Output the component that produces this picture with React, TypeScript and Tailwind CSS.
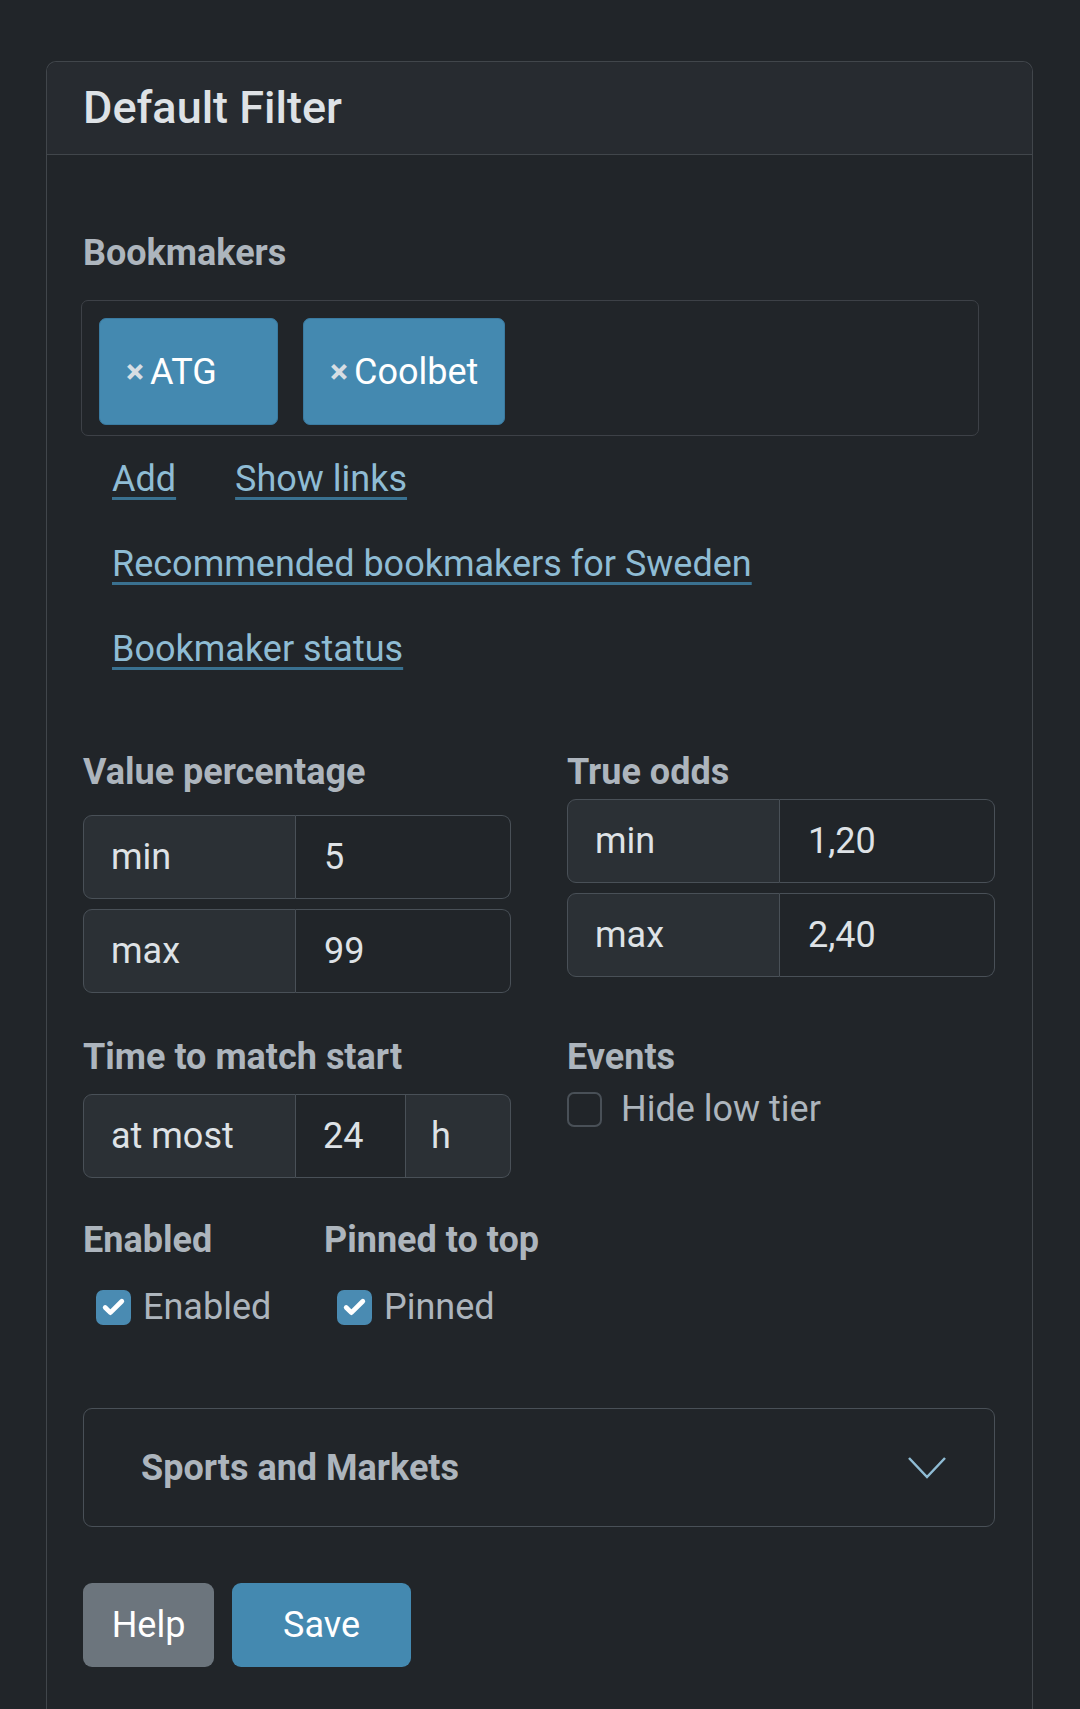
import { Check } from "lucide-react";

const font = "font-['Roboto','Liberation_Sans',sans-serif]";

function Label({ children, className = "" }: { children: React.ReactNode; className?: string }) {
  return <div className={`text-[36px] leading-[42px] font-bold text-[#adb5bd] ${className}`}>{children}</div>;
}

function RangeRow({ label, value }: { label: string; value: string }) {
  return (
    <div className="flex h-[84px] text-[36px] text-[#dee2e6]">
      <div className="w-[213px] flex items-center pl-[27px] bg-[#2b3035] border border-[#495057] rounded-l-[9px]">
        {label}
      </div>
      <div className="flex-1 flex items-center pl-[28px] bg-[#212529] border border-l-0 border-[#495057] rounded-r-[9px]">
        {value}
      </div>
    </div>
  );
}

function CheckBox({ checked, label, gap = "gap-[12px]" }: { checked: boolean; label: string; gap?: string }) {
  return (
    <div className={`flex items-center ${gap}`}>
      {checked ? (
        <span className="w-[35px] h-[35px] rounded-[7px] bg-[#4a8bb2] flex items-center justify-center">
          <Check size={25} strokeWidth={4.5} className="text-white" />
        </span>
      ) : (
        <span className="w-[35px] h-[35px] rounded-[7px] border-2 border-[#495057]" />
      )}
      <span className="text-[36px] text-[#adb5bd]">{label}</span>
    </div>
  );
}

function Chip({ name, width }: { name: string; width: string }) {
  return (
    <span className={`${width} h-[107px] flex items-center pl-[26px] bg-[#4489b0] border border-[#3a7aa0] rounded-[7px] text-[36px] text-white`}>
      <span className="text-[#d6dde3] text-[34px] font-bold mr-[6px]">×</span>
      {name}
    </span>
  );
}

const linkCls = "underline underline-offset-[6px] decoration-[#3a7190] decoration-[3px]";

export default function App() {
  return (
    <div className={`min-h-screen bg-[#212529] pt-[61px] ${font}`}>
      <div className="ml-[46px] w-[987px] h-[1648px] rounded-t-[10px] border border-b-0 border-[#41464b]">
        {/* header */}
        <div className="h-[93px] flex items-center pl-[36px] bg-[#272b30] border-b border-[#41464b] rounded-t-[10px]">
          <h5 className="text-[45px] font-medium text-[#dee2e6]">Default Filter</h5>
        </div>

        {/* body */}
        <div className="pl-[36px] pt-[77px]">
          <Label>Bookmakers</Label>

          <div className="-ml-[2px] mt-[26px] w-[898px] h-[136px] border border-[#3d4147] rounded-[7px] flex items-start gap-[25px] pl-[17px] pt-[17px]">
            <Chip name="ATG" width="w-[179px]" />
            <Chip name="Coolbet" width="w-[202px]" />
          </div>

          <div className="pl-[29px] text-[36px] text-[#8fbcd4] flex flex-col gap-[31px] mt-[16px]">
            <div className="flex gap-[59px]">
              <a className={linkCls}>Add</a>
              <a className={linkCls}>Show links</a>
            </div>
            <a className={linkCls}>Recommended bookmakers for Sweden</a>
            <a className={linkCls}>Bookmaker status</a>
          </div>

          <div className="mt-[75px] grid grid-cols-[428px_428px] gap-x-[56px]">
            <div>
              <Label>Value percentage</Label>
              <div className="mt-[22px] flex flex-col gap-[10px]">
                <RangeRow label="min" value="5" />
                <RangeRow label="max" value="99" />
              </div>
            </div>
            <div>
              <Label>True odds</Label>
              <div className="mt-[6px] flex flex-col gap-[10px]">
                <RangeRow label="min" value="1,20" />
                <RangeRow label="max" value="2,40" />
              </div>
            </div>

            <div className="mt-[43px]">
              <Label>Time to match start</Label>
              <div className="mt-[16px] flex h-[84px] text-[36px] text-[#dee2e6]">
                <div className="w-[213px] flex items-center pl-[27px] bg-[#2b3035] border border-[#495057] rounded-l-[9px]">
                  at most
                </div>
                <div className="w-[110px] flex items-center pl-[27px] bg-[#212529] border border-l-0 border-[#495057]">
                  24
                </div>
                <div className="flex-1 flex items-center pl-[25px] bg-[#2b3035] border border-l-0 border-[#495057] rounded-r-[9px]">
                  h
                </div>
              </div>
            </div>
            <div className="mt-[43px]">
              <Label>Events</Label>
              <div className="mt-[4px]">
                <CheckBox checked={false} label="Hide low tier" gap="gap-[19px]" />
              </div>
            </div>
          </div>

          <div className="mt-[41px] flex">
            <div className="w-[241px]">
              <Label>Enabled</Label>
              <div className="mt-[19px] pl-[13px]">
                <CheckBox checked label="Enabled" />
              </div>
            </div>
            <div>
              <Label>Pinned to top</Label>
              <div className="mt-[19px] pl-[13px]">
                <CheckBox checked label="Pinned" />
              </div>
            </div>
          </div>

          <div className="mt-[74px] w-[912px] h-[119px] border border-[#495057] rounded-[9px] flex items-center justify-between pl-[57px] pr-[48px]">
            <span className="text-[36px] font-bold text-[#adb5bd]">Sports and Markets</span>
            <svg width="38" height="22" viewBox="0 0 38 22" fill="none">
              <path d="M1 1 L19 20 L37 1" stroke="#8fbcd4" strokeWidth="2.5" />
            </svg>
          </div>

          <div className="mt-[56px] flex gap-[18px]">
            <button className="w-[131px] h-[84px] rounded-[9px] bg-[#6c757d] text-white text-[36px]">Help</button>
            <button className="w-[179px] h-[84px] rounded-[9px] bg-[#4489b0] text-white text-[36px]">Save</button>
          </div>
        </div>
      </div>
    </div>
  );
}
